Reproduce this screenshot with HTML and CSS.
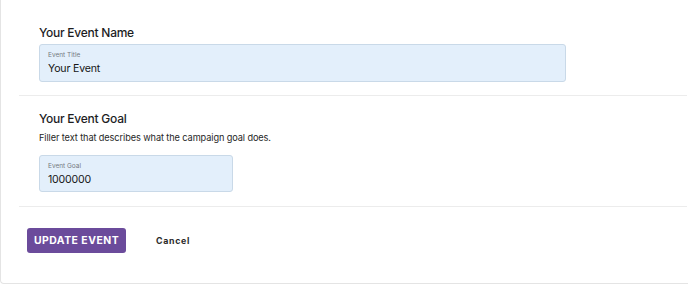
FILE: index.html
```html
<!DOCTYPE html>
<html>
<head>
    <title>Edit Event</title>
    <meta charset="utf-8">
    <meta name="viewport" content="width=device-width, initial-scale=1">
    <link rel="stylesheet" href="styles.css">
</head>
<body>

  <div class="card">

    <div class="section">
      <h2 class="section-title">Your Event Name</h2>
      <div class="field field-wide">
        <label class="field-label">Event Title</label>
        <div class="field-value">Your Event</div>
      </div>
    </div>

    <div class="section section-goal">
      <h2 class="section-title">Your Event Goal</h2>
      <p class="section-text">Filler text that describes what the campaign goal does.</p>
      <div class="field field-small">
        <label class="field-label">Event Goal</label>
        <div class="field-value">1000000</div>
      </div>
    </div>

    <div class="actions">
      <a href="#" class="button">UPDATE EVENT</a>
      <a href="#" class="link">Cancel</a>
    </div>

  </div>

</body>
</html>
```

FILE: styles.css
```css
* {
  box-sizing: border-box;
}

body {
  margin: 0;
  padding: 0;
  background-color: #ffffff;
  font-family: Inter, "Noto Sans", sans-serif;
  color: #1f2328;
  overflow: hidden;
}

/* Card that runs off the top and right of the window */
.card {
  width: 100%;
  height: 284px;
  border: 1px solid #e4e4e4;
  border-top: none;
  border-right: none;
  border-bottom-left-radius: 4px;
  padding-left: 18px;
  padding-right: 1px;
}

.section {
  padding: 24px 20px 13px 20px;
  border-bottom: 1px solid #ececec;
}

.section-goal {
  padding-top: 14px;
  padding-bottom: 14px;
}

.section-title {
  margin: 0;
  font-size: 12px;
  font-weight: 500;
  letter-spacing: -0.25px;
  line-height: 18px;
  color: #1d1d1f;
}

.section-text {
  margin: 3px 0 0 0;
  font-size: 9.2px;
  letter-spacing: -0.1px;
  line-height: 14px;
  color: #262626;
}

.field {
  margin-top: 2px;
  height: 38px;
  background-color: #e3effb;
  border: 1px solid #c9d9e8;
  border-radius: 3px;
  padding: 5px 8px 0 8px;
}

.section-text + .field {
  margin-top: 10px;
  height: 37px;
}

.field-wide {
  width: 527px;
}

.field-small {
  width: 194px;
}

.field-label {
  display: block;
  font-size: 6.5px;
  line-height: 10px;
  color: #74797f;
}

.field-value {
  font-size: 10.6px;
  letter-spacing: -0.2px;
  line-height: 18px;
  color: #161616;
}

/* Buttons row */
.actions {
  display: flex;
  align-items: center;
  padding: 21px 8px;
}

.button {
  display: inline-block;
  width: 99px;
  height: 25px;
  line-height: 25px;
  background-color: #6b4b9b;
  color: #ffffff;
  border-radius: 3px;
  font-size: 10.4px;
  font-weight: 700;
  letter-spacing: 0.5px;
  text-align: center;
  text-decoration: none;
}

.link {
  margin-left: 30px;
  color: #2a2a2a;
  font-size: 8.8px;
  font-weight: 700;
  letter-spacing: 0.7px;
  text-decoration: none;
}
```
